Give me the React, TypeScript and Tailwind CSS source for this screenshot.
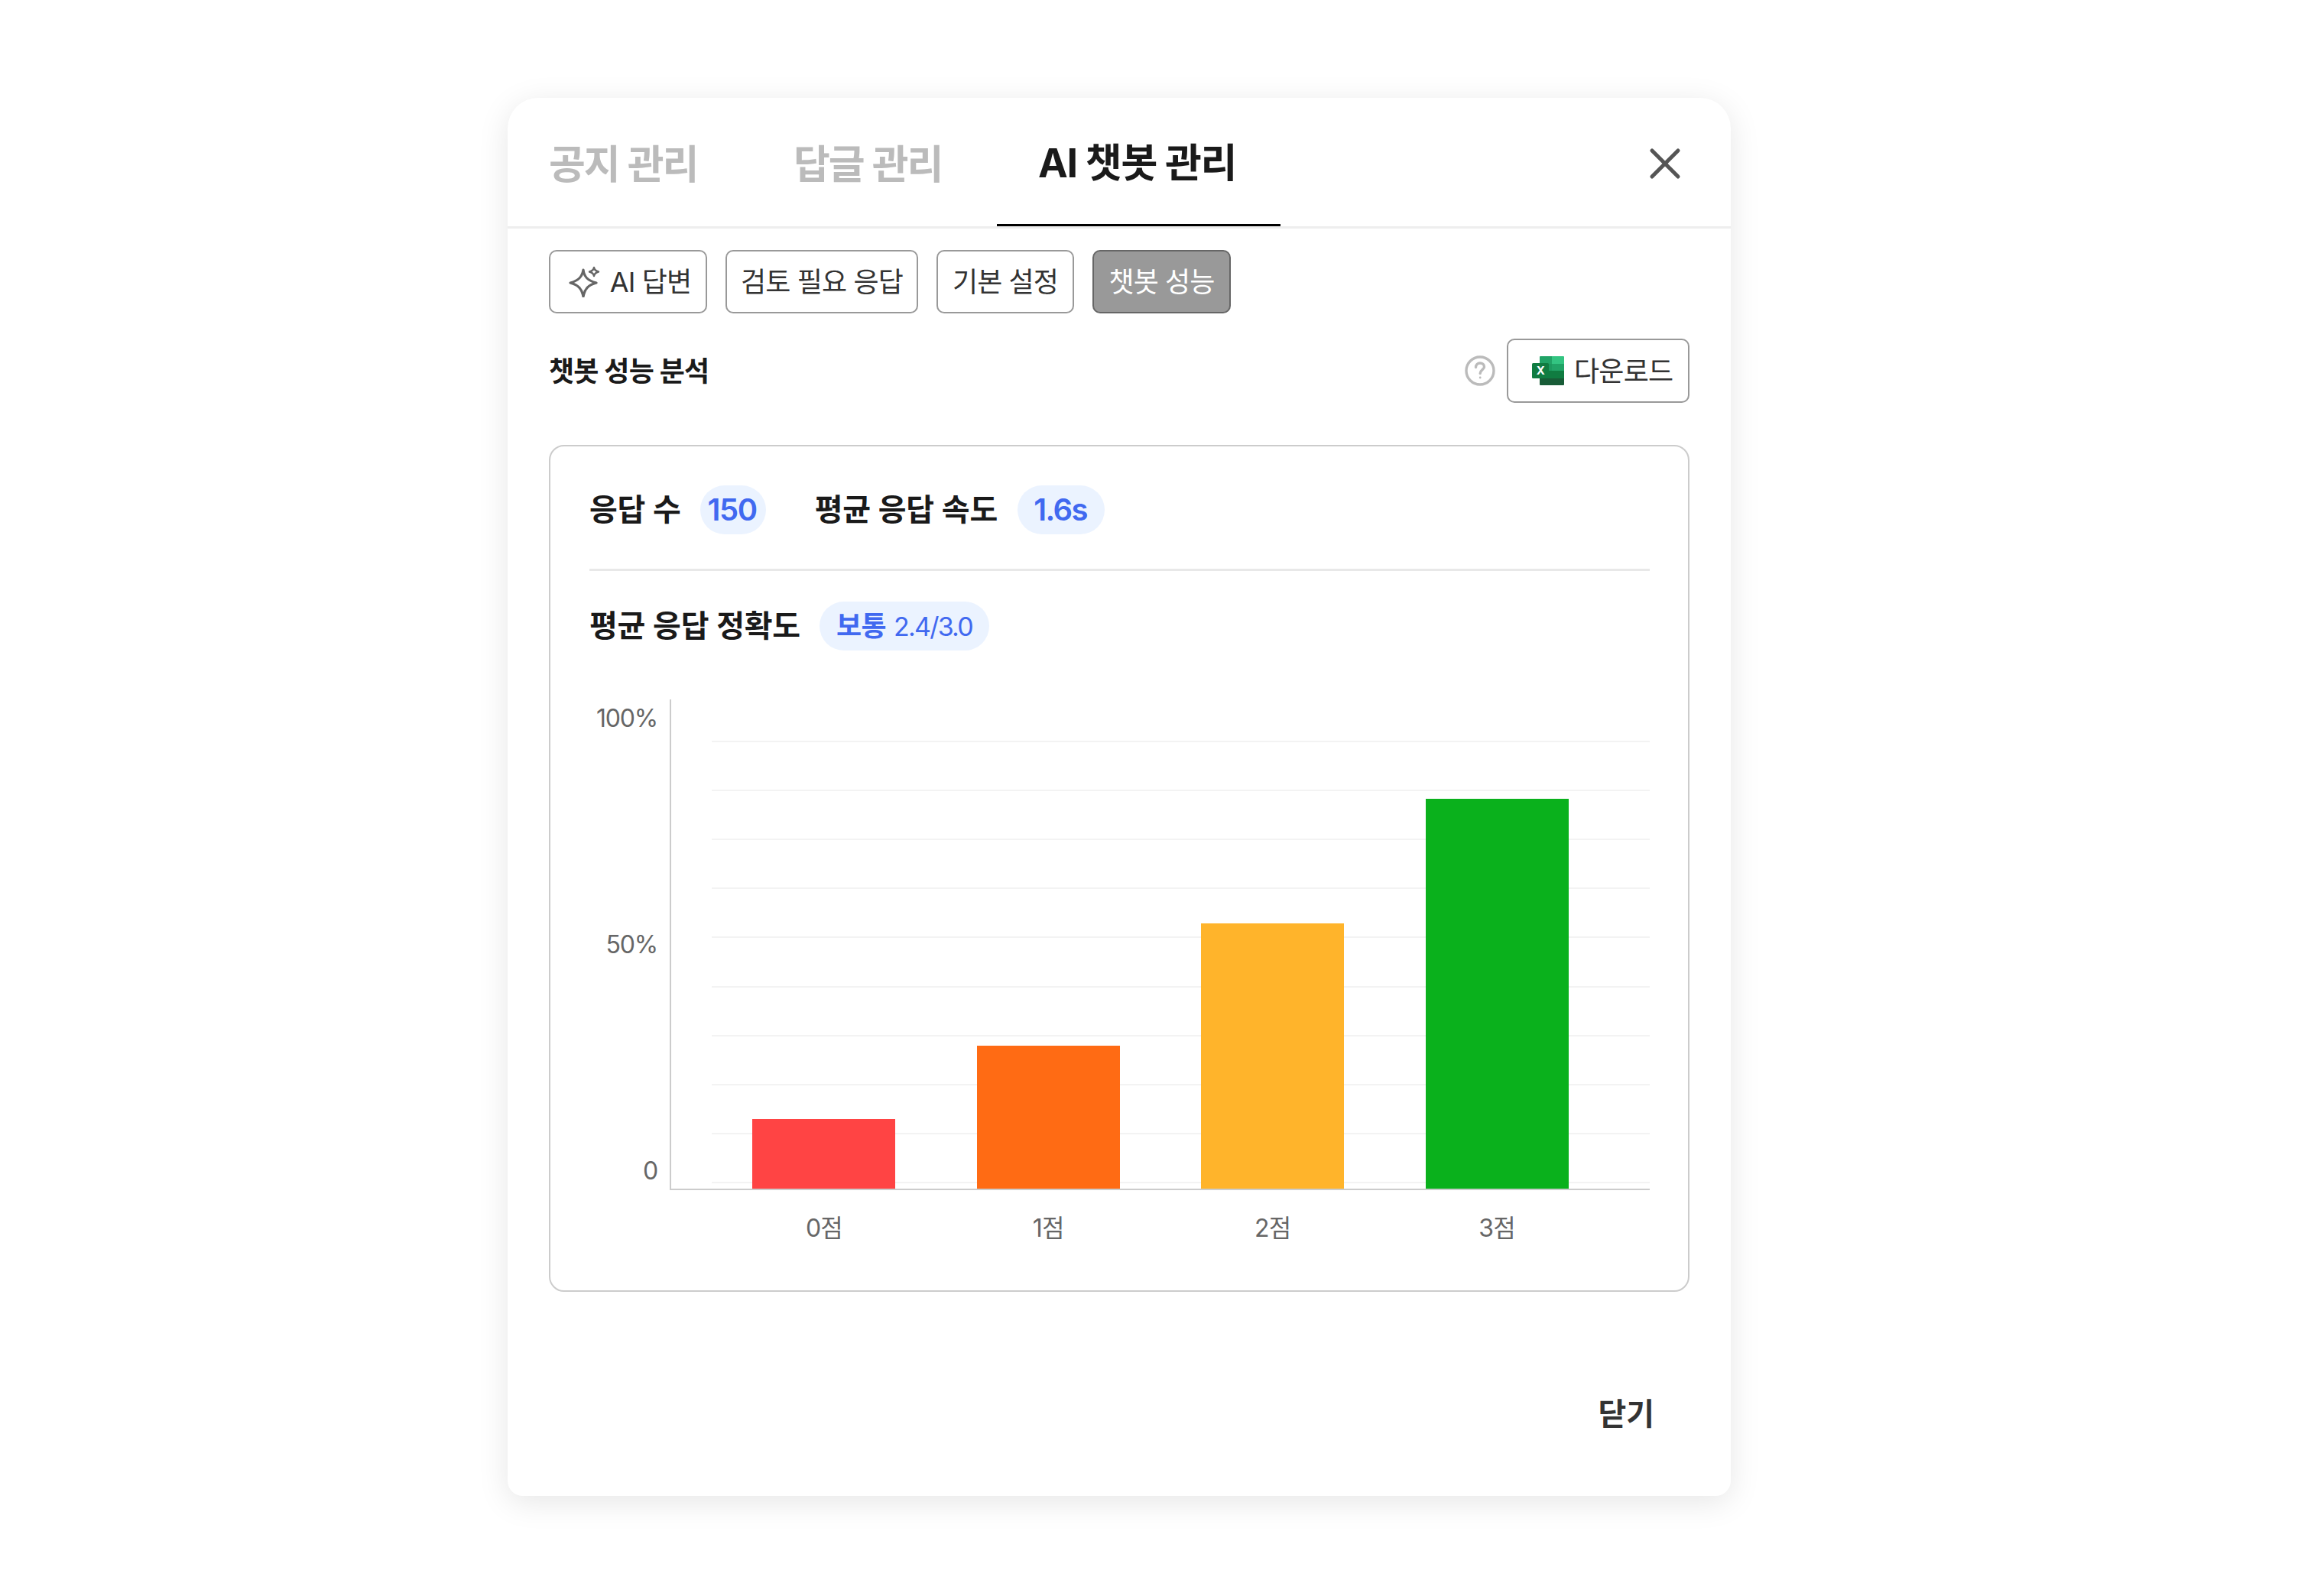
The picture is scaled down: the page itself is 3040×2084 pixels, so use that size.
import { X } from "lucide-react";

const bars = [
  { label: "0점", className: "h-[91px] bg-[#ff4444]" },
  { label: "1점", className: "h-[187px] bg-[#ff6b14]" },
  { label: "2점", className: "h-[347px] bg-[#ffb42b]" },
  { label: "3점", className: "h-[510px] bg-[#0ab11c]" },
];

function SparkleIcon() {
  return (
    <svg width="41" height="41" viewBox="0 0 41 41" fill="none" stroke="#666" strokeWidth="3.2" strokeLinejoin="round">
      <path d="M19 5 C20 14 24.5 19 36 22 C25 25 21 30 19 40 C17 30 13 25 2 22 C13 19 17.5 14 19 5 Z" />
      <path d="M33 2 C33.5 5 35 6.5 39 7.5 C35 8.5 33.5 10 33 13 C32.5 10 31 8.5 27 7.5 C31 6.5 32.5 5 33 2 Z" strokeWidth="2.4" />
    </svg>
  );
}

function HelpIcon() {
  return (
    <svg width="40" height="40" viewBox="0 0 40 40" fill="none" stroke="#bbb" strokeWidth="3.4" strokeLinecap="round">
      <circle cx="20" cy="20" r="18" />
      <path d="M14.5 15.5 C14.5 12 17 10 20 10 C23.2 10 25.5 12 25.5 15 C25.5 18.5 20.2 19 20.2 23.5" />
      <circle cx="20.2" cy="29" r="1.4" fill="#bbb" stroke="none" />
    </svg>
  );
}

function ExcelIcon() {
  return (
    <svg width="42" height="38" viewBox="0 0 42 38">
      <path d="M10 1 Q10 0 11 0 H26 V10 H10 Z" fill="#21a366" />
      <path d="M26 0 H41 Q42 0 42 1 V10 H26 Z" fill="#33c481" />
      <rect x="10" y="10" width="16" height="9" fill="#1d9a5f" />
      <rect x="26" y="10" width="16" height="9" fill="#21a366" />
      <rect x="10" y="19" width="16" height="10" fill="#107c41" />
      <rect x="26" y="19" width="16" height="10" fill="#107c41" />
      <path d="M10 29 H42 V37 Q42 38 41 38 H11 Q10 38 10 37 Z" fill="#185c37" />
      <rect x="0" y="9" width="22" height="20" rx="1.5" fill="#107c41" />
      <text x="11" y="24" textAnchor="middle" fontSize="15" fontWeight="700" fill="#fff" fontFamily="Inter">X</text>
    </svg>
  );
}

function Pill({ children, className }: { children: React.ReactNode; className?: string }) {
  return (
    <span className={`flex h-[64px] items-center rounded-full bg-[#ebf3ff] font-semibold text-[#4169f0] ${className}`}>{children}</span>
  );
}

function SubTab({ children, active, className }: { children: React.ReactNode; active?: boolean; className?: string }) {
  return (
    <button
      className={`flex h-[83px] items-center justify-center rounded-[10px] border-2 text-[36px] tracking-[-0.9px] ${
        active ? "border-[#666] bg-[#999] text-white" : "border-[#999] bg-white text-[#333]"
      } ${className}`}
    >
      {children}
    </button>
  );
}

export default function App() {
  return (
    <div className="min-h-screen bg-white pl-[664px] pt-[128px] font-[Inter,'Noto_Sans_CJK_KR',sans-serif]">
      <div className="w-[1600px] rounded-t-[40px] rounded-b-[20px] bg-white shadow-[0_8px_40px_rgba(0,0,0,0.1)]">
        {/* 상단 탭 */}
        <div className="flex h-[171px] items-stretch gap-[20px] border-b-[3px] border-[#eee]">
          <div className="flex w-[300px] items-center pl-[54px] pt-[8px] text-[52px] font-semibold tracking-[-2px] text-[#bbb]">공지 관리</div>
          <div className="flex w-[300px] items-center pl-[54px] pt-[8px] text-[52px] font-semibold tracking-[-2px] text-[#bbb]">답글 관리</div>
          <div className="flex w-[371px] items-center border-b-[3px] border-black pl-[54px] pt-[7px] text-[52px] font-bold tracking-[-1.3px] text-[#1a1a1a]">AI 챗봇 관리</div>
          <button className="ml-auto mr-[52px] self-center pt-[3px] text-[#555]">
            <X size={68} strokeWidth={1.8} />
          </button>
        </div>

        <div className="px-[54px] pt-[28px]">
          <div className="flex gap-[24px]">
            <SubTab className="w-[207px] gap-[13px] pl-[5px]">
              <SparkleIcon />
              AI 답변
            </SubTab>
            <SubTab className="w-[252px]">검토 필요 응답</SubTab>
            <SubTab className="w-[180px]">기본 설정</SubTab>
            <SubTab active className="w-[181px]">챗봇 성능</SubTab>
          </div>

          <div className="mt-[33px] flex items-center justify-between">
            <h2 className="mt-[2px] text-[36px] font-bold tracking-[-0.8px] text-[#1a1a1a]">챗봇 성능 분석</h2>
            <div className="flex items-center gap-[15px]">
              <HelpIcon />
              <button className="flex h-[84px] w-[239px] items-center gap-[13px] rounded-[10px] border-2 border-[#999] pl-[31px] text-[36px] tracking-[-0.8px] text-[#333]">
                <ExcelIcon />
                <span className="mt-[2px]">다운로드</span>
              </button>
            </div>
          </div>

          {/* 성능 카드 */}
          <div className="mt-[55px] rounded-[20px] border-2 border-[#ccc] pl-[51px] pr-[50px] pt-[51px] pb-[61px]">
            <div className="flex items-center border-b-[3px] border-[#e8e8e8] pb-[45px]">
              <span className="text-[40px] font-semibold tracking-[-0.2px] text-[#1a1a1a]">응답 수</span>
              <Pill className="ml-[25px] w-[86px] justify-center pr-[2px] text-[40px] tracking-[-1.4px]">150</Pill>
              <span className="ml-[64px] text-[40px] font-semibold tracking-[-0.2px] text-[#1a1a1a]">평균 응답 속도</span>
              <Pill className="ml-[26px] w-[114px] justify-center pr-[2px] text-[40px] tracking-[-1.6px]">1.6s</Pill>
            </div>

            <div className="mt-[40px] flex items-center">
              <span className="text-[40px] font-semibold tracking-[-0.2px] text-[#1a1a1a]">평균 응답 정확도</span>
              <Pill className="ml-[25px] w-[222px] justify-center gap-[10px] text-[36px] tracking-[-0.6px]">
                보통
                <span className="text-[34px] font-normal tracking-[-1.8px]">2.4/3.0</span>
              </Pill>
            </div>

            {/* 차트 */}
            <div className="mt-[64px] flex">
              <div className="flex h-[642px] w-[105px] flex-col items-end justify-between py-[5px] pr-[16px] text-[32px] leading-[40px] tracking-[-1.2px] text-[#666]">
                <span>100%</span>
                <span>50%</span>
                <span>0</span>
              </div>
              <div className="flex-1">
                <div className="relative h-[642px] border-b-2 border-l-2 border-[#ccc]">
                  <div className="absolute left-[53px] right-0 top-[54px] flex h-[579px] flex-col justify-between">
                    {Array.from({ length: 10 }).map((_, i) => (
                      <div key={i} className="h-[2px] bg-[#f3f3f3]" />
                    ))}
                  </div>
                  <div className="relative flex h-full items-end justify-evenly">
                    {bars.map((b) => (
                      <div key={b.label} className={`w-[187px] ${b.className}`} />
                    ))}
                  </div>
                </div>
                <div className="mt-[30px] flex justify-evenly pl-[2px] text-[32px] leading-[40px] tracking-[-0.8px] text-[#666]">
                  {bars.map((b) => (
                    <span key={b.label} className="w-[187px] text-center">{b.label}</span>
                  ))}
                </div>
              </div>
            </div>
          </div>
        </div>

        <div className="mt-[132px] flex justify-end pb-[79px] pr-[100px]">
          <button className="text-[40px] font-semibold leading-[56px] text-[#333]">닫기</button>
        </div>
      </div>
    </div>
  );
}
